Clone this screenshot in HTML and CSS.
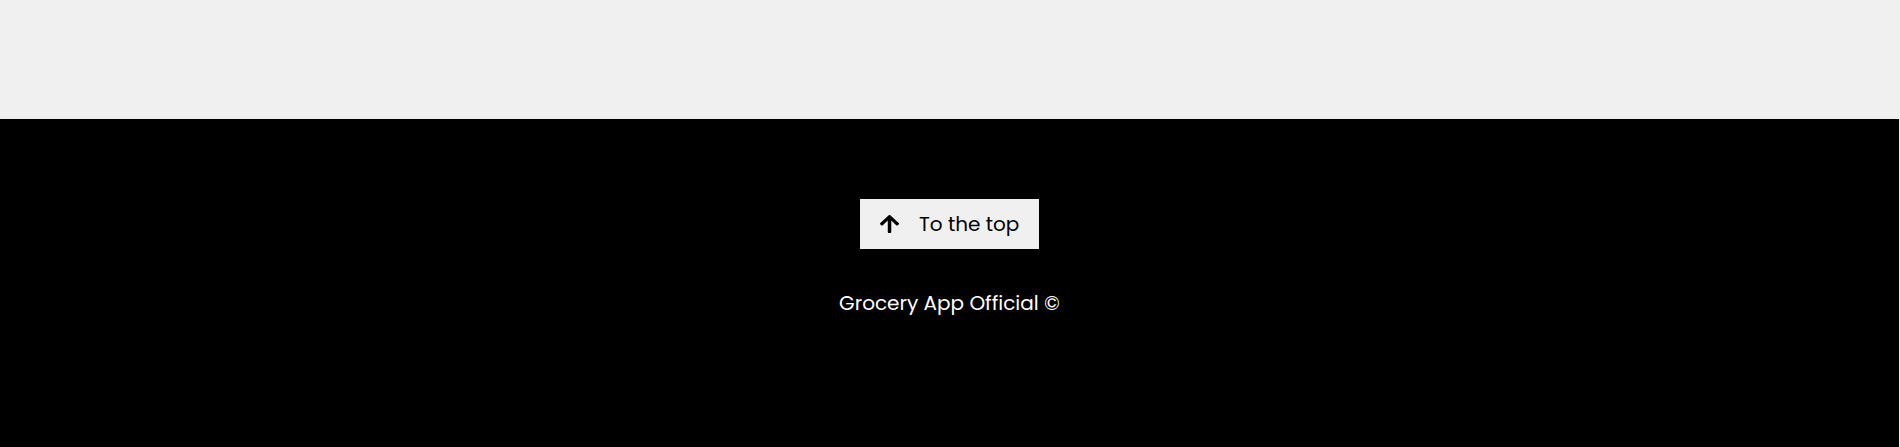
FILE: index.html
```html
<!DOCTYPE html>
<html lang="en">
<head>
<meta charset="utf-8">
<title>Grocery App</title>
<link rel="stylesheet" href="styles.css">
</head>
<body>
<div class="top-space"></div>
<footer class="footer">
  <button class="to-top" type="button">
    <svg class="arrow" viewBox="5 32 437 448" width="19" height="18" preserveAspectRatio="none" aria-hidden="true"><path d="M34.9 289.5l-22.2-22.2c-9.4-9.4-9.4-24.6 0-33.9L207 39c9.4-9.4 24.6-9.4 33.9 0l194.3 194.3c9.4 9.4 9.4 24.6 0 33.9L413 289.4c-9.5 9.5-25 9.3-34.3-.4L264 168.6V456c0 13.3-10.7 24-24 24h-32c-13.3 0-24-10.7-24-24V168.6L69.2 289.1c-9.3 9.8-24.8 10-34.3.4z"/></svg>
    <span>To the top</span>
  </button>
  <p class="copy">Grocery App Official ©</p>
</footer>
</body>
</html>
```

FILE: styles.css
```css
html, body {
  margin: 0;
  padding: 0;
  background: #f0f0f0;
  font-family: "Poppins", "Inter", "Noto Sans", sans-serif;
}
.top-space {
  height: 119px;
}
.footer {
  background: #000;
  width: 1899px;
  min-height: 328px;
  display: flex;
  flex-direction: column;
  align-items: center;
  padding-top: 80px;
  box-sizing: border-box;
}
.to-top {
  display: flex;
  align-items: center;
  gap: 20px;
  width: 179px;
  height: 50px;
  padding: 0 0 0 20px;
  border: none;
  background: #f0f0f0;
  color: #000;
  font-family: inherit;
  font-size: 20px;
  font-weight: 400;
  cursor: pointer;
}
.arrow {
  fill: #000;
  flex: none;
}
.copy {
  margin: 41px 0 0;
  color: #fff;
  font-size: 20px;
  font-weight: 400;
  line-height: 26px;
}
```
